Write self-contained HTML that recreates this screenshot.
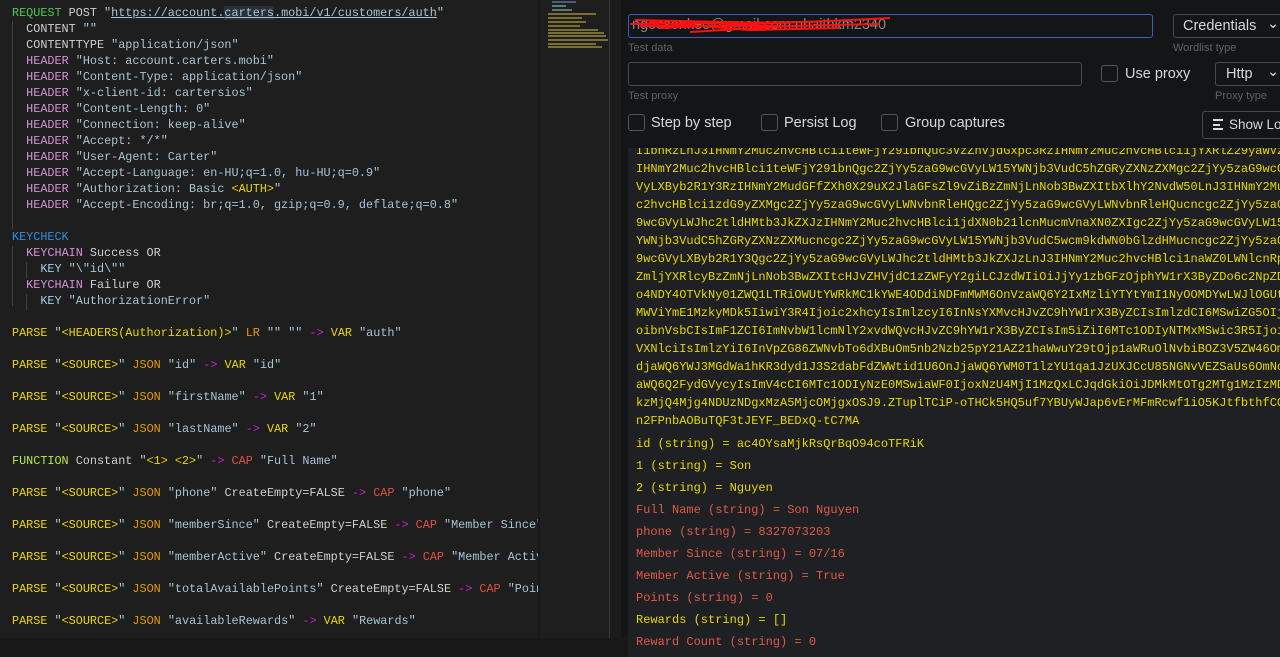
<!DOCTYPE html>
<html><head><meta charset="utf-8"><style>
*{margin:0;padding:0;box-sizing:border-box}
body{width:1280px;height:657px;overflow:hidden;background:#141517;position:relative;font-family:"Liberation Mono",monospace}
#ed{position:absolute;left:0;top:0;width:538px;height:638px;background:#1e1e1e;overflow:hidden}
#ed pre{position:absolute;left:12px;top:5px;font:11.8px/16px "Liberation Mono",monospace;color:#d0d0d0;white-space:pre}
.g{color:#4ec94e}.p{color:#d890d8}.s{color:#a9c4d4}.b{color:#2f8fe0}.k{color:#9cd0e8}.y{color:#e8d800}.o{color:#e89a00}.m{color:#d020d0}.r{color:#e05040}.f{color:#b8e840}
.u{text-decoration:underline}
.guide{position:absolute;width:1px;background:#404040}
#mini{position:absolute;left:538px;top:0;width:72px;height:638px;background:#1e1e1e;border-left:2px solid #191919}
#vl{position:absolute;left:609px;top:0;width:1px;height:638px;background:#3a3a3a}
#strip{position:absolute;left:610px;top:0;width:11px;height:638px;background:#1b1b1b}
#bot{position:absolute;left:0;top:638px;width:628px;height:19px;background:#181818}
#log{position:absolute;left:628px;top:148px;width:652px;height:509px;background:#1f2023;overflow:hidden;font-family:"Liberation Mono",monospace;font-size:12px}
#log .b64{position:absolute;left:8px;top:-6px;line-height:18px;color:#e8d800;white-space:pre;font-size:12px}
.ln{position:absolute;left:8px;white-space:pre;font-size:12px}
.ly{color:#e8d800}.lr{color:#e05a48}
.inp{position:absolute;border:1px solid #4a4a4a;border-radius:3px;background:#141517}
.lbl{position:absolute;font:11px "Liberation Sans",sans-serif;color:#5f6166}
.txt{position:absolute;font:14.5px "Liberation Sans",sans-serif;color:#d8d8d8;white-space:nowrap}
.cb{position:absolute;width:17px;height:17px;border:1px solid #555;border-radius:3px}
</style></head><body>
<div id="ed">
<div class="guide" style="left:12px;top:21px;height:208px"></div>
<div class="guide" style="left:12px;top:246px;height:60px"></div>
<div class="guide" style="left:26px;top:262px;height:16px"></div>
<div class="guide" style="left:26px;top:294px;height:16px"></div>
<pre><span class="g">REQUEST</span> POST <span class="s">"<span class="u">https://account.<span style="background:#2a3038">carters</span>.mobi/v1/customers/auth</span>"</span>
  CONTENT <span class="s">""</span>
  CONTENTTYPE <span class="s">"application/json"</span>
  <span class="p">HEADER</span> <span class="s">"Host: account.carters.mobi"</span>
  <span class="p">HEADER</span> <span class="s">"Content-Type: application/json"</span>
  <span class="p">HEADER</span> <span class="s">"x-client-id: cartersios"</span>
  <span class="p">HEADER</span> <span class="s">"Content-Length: 0"</span>
  <span class="p">HEADER</span> <span class="s">"Connection: keep-alive"</span>
  <span class="p">HEADER</span> <span class="s">"Accept: */*"</span>
  <span class="p">HEADER</span> <span class="s">"User-Agent: Carter"</span>
  <span class="p">HEADER</span> <span class="s">"Accept-Language: en-HU;q=1.0, hu-HU;q=0.9"</span>
  <span class="p">HEADER</span> <span class="s">"Authorization: Basic <span class="y">&lt;AUTH&gt;</span>"</span>
  <span class="p">HEADER</span> <span class="s">"Accept-Encoding: br;q=1.0, gzip;q=0.9, deflate;q=0.8"</span>

<span class="b">KEYCHECK</span>
  <span class="p">KEYCHAIN</span> Success OR
    <span class="k">KEY</span> <span class="s">"\"id\""</span>
  <span class="p">KEYCHAIN</span> Failure OR
    <span class="k">KEY</span> <span class="s">"AuthorizationError"</span>

<span class="y">PARSE</span> <span class="s">"<span class="y">&lt;HEADERS(Authorization)&gt;</span>"</span> <span class="o">LR</span> <span class="s">""</span> <span class="s">""</span> <span class="m">-&gt;</span> <span class="y">VAR</span> <span class="s">"auth"</span>

<span class="y">PARSE</span> <span class="s">"<span class="y">&lt;SOURCE&gt;</span>"</span> <span class="o">JSON</span> <span class="s">"id"</span> <span class="m">-&gt;</span> <span class="y">VAR</span> <span class="s">"id"</span>

<span class="y">PARSE</span> <span class="s">"<span class="y">&lt;SOURCE&gt;</span>"</span> <span class="o">JSON</span> <span class="s">"firstName"</span> <span class="m">-&gt;</span> <span class="y">VAR</span> <span class="s">"1"</span>

<span class="y">PARSE</span> <span class="s">"<span class="y">&lt;SOURCE&gt;</span>"</span> <span class="o">JSON</span> <span class="s">"lastName"</span> <span class="m">-&gt;</span> <span class="y">VAR</span> <span class="s">"2"</span>

<span class="f">FUNCTION</span> Constant <span class="s">"<span class="y">&lt;1&gt; &lt;2&gt;</span>"</span> <span class="m">-&gt;</span> <span class="r">CAP</span> <span class="s">"Full Name"</span>

<span class="y">PARSE</span> <span class="s">"<span class="y">&lt;SOURCE&gt;</span>"</span> <span class="o">JSON</span> <span class="s">"phone"</span> CreateEmpty=FALSE <span class="m">-&gt;</span> <span class="r">CAP</span> <span class="s">"phone"</span>

<span class="y">PARSE</span> <span class="s">"<span class="y">&lt;SOURCE&gt;</span>"</span> <span class="o">JSON</span> <span class="s">"memberSince"</span> CreateEmpty=FALSE <span class="m">-&gt;</span> <span class="r">CAP</span> <span class="s">"Member Since"</span>

<span class="y">PARSE</span> <span class="s">"<span class="y">&lt;SOURCE&gt;</span>"</span> <span class="o">JSON</span> <span class="s">"memberActive"</span> CreateEmpty=FALSE <span class="m">-&gt;</span> <span class="r">CAP</span> <span class="s">"Member Active"</span>

<span class="y">PARSE</span> <span class="s">"<span class="y">&lt;SOURCE&gt;</span>"</span> <span class="o">JSON</span> <span class="s">"totalAvailablePoints"</span> CreateEmpty=FALSE <span class="m">-&gt;</span> <span class="r">CAP</span> <span class="s">"Points"</span>

<span class="y">PARSE</span> <span class="s">"<span class="y">&lt;SOURCE&gt;</span>"</span> <span class="o">JSON</span> <span class="s">"availableRewards"</span> <span class="m">-&gt;</span> <span class="y">VAR</span> <span class="s">"Rewards"</span></pre>
</div>
<div id="mini">
<svg width="70" height="50" style="position:absolute;left:6px;top:0">
<g stroke-width="1.3">
<line x1="6" y1="2" x2="30" y2="2" stroke="#6a7fa0"/><line x1="6" y1="6" x2="20" y2="6" stroke="#8aa"/><line x1="6" y1="10" x2="26" y2="10" stroke="#8aa"/>
<line x1="2" y1="14" x2="50" y2="14" stroke="#b0a040"/><line x1="2" y1="18" x2="36" y2="18" stroke="#b0a040"/><line x1="2" y1="22" x2="40" y2="22" stroke="#b0a040"/>
<line x1="2" y1="26" x2="34" y2="26" stroke="#b0a040"/><line x1="2" y1="30" x2="52" y2="30" stroke="#b0a040"/><line x1="2" y1="33" x2="58" y2="33" stroke="#b0a040"/>
<line x1="2" y1="36" x2="60" y2="36" stroke="#b0a040"/><line x1="2" y1="40" x2="62" y2="40" stroke="#b0a040"/><line x1="2" y1="44" x2="50" y2="44" stroke="#b0a040"/><line x1="2" y1="47" x2="56" y2="47" stroke="#b0a040"/>
</g></svg>
<div style="position:absolute;left:70px;top:12px;width:6px;height:8px;background:#777"></div>
<div style="position:absolute;left:70px;top:26px;width:6px;height:8px;background:#777"></div>
</div>
<div id="vl"></div><div id="strip"></div><div id="bot"></div>

<div class="inp" style="left:628px;top:14px;width:525px;height:24px;border-color:#3d5bc0"></div>
<div class="txt" style="left:632px;top:17px;color:#888">ngocsonkeo@gmail.com:nhaithkm2340</div>
<svg style="position:absolute;left:590px;top:14px" width="330" height="24"><g stroke="#ff1010" stroke-width="2" fill="none"><path d="M40 10 L220 8 L300 4 M50 12 L200 12 L290 10 M60 8 L160 16 L250 14 M70 14 L260 6 M100 18 L200 12 M45 6 L180 9"/></g></svg>
<div class="lbl" style="left:628px;top:42px">Test data</div>
<div class="inp" style="left:1173px;top:14px;width:120px;height:24px"></div>
<div class="txt" style="left:1183px;top:18px">Credentials</div>
<div class="txt" style="left:1267px;top:16px">⌄</div>
<div class="lbl" style="left:1173px;top:42px">Wordlist type</div>
<div class="inp" style="left:628px;top:62px;width:454px;height:24px"></div>
<div class="lbl" style="left:628px;top:90px">Test proxy</div>
<div class="cb" style="left:1101px;top:65px"></div>
<div class="txt" style="left:1125px;top:66px">Use proxy</div>
<div class="inp" style="left:1215px;top:62px;width:80px;height:24px"></div>
<div class="txt" style="left:1226px;top:66px">Http</div>
<div class="txt" style="left:1267px;top:64px">⌄</div>
<div class="lbl" style="left:1215px;top:90px">Proxy type</div>
<div class="cb" style="left:628px;top:114px"></div><div class="txt" style="left:651px;top:115px">Step by step</div>
<div class="cb" style="left:761px;top:114px"></div><div class="txt" style="left:784px;top:115px">Persist Log</div>
<div class="cb" style="left:881px;top:114px"></div><div class="txt" style="left:905px;top:115px">Group captures</div>
<div class="inp" style="left:1202px;top:111px;width:90px;height:28px"></div>
<div style="position:absolute;left:1213px;top:119px;width:10px;height:11px;border-top:2px solid #ddd;border-bottom:2px solid #ddd"></div>
<div style="position:absolute;left:1213px;top:123.5px;width:7px;height:2px;background:#ddd"></div>
<div class="txt" style="left:1229px;top:117px;font-size:13.5px">Show Log</div>

<div id="log">
<div class="b64">I1bnRzLnJ3IHNmY2Muc2hvcHBlci1teWFjY291bnQuc3VzZnVjdGxpc3RzIHNmY2Muc2hvcHBlci1jYXRlZ29yaWVz
IHNmY2Muc2hvcHBlci1teWFjY291bnQgc2ZjYy5zaG9wcGVyLW15YWNjb3VudC5hZGRyZXNzZXMgc2ZjYy5zaG9wcG
VyLXByb2R1Y3RzIHNmY2MudGFfZXh0X29uX2JlaGFsZl9vZiBzZmNjLnNob3BwZXItbXlhY2NvdW50LnJ3IHNmY2Mu
c2hvcHBlci1zdG9yZXMgc2ZjYy5zaG9wcGVyLWNvbnRleHQgc2ZjYy5zaG9wcGVyLWNvbnRleHQucncgc2ZjYy5zaG
9wcGVyLWJhc2tldHMtb3JkZXJzIHNmY2Muc2hvcHBlci1jdXN0b21lcnMucmVnaXN0ZXIgc2ZjYy5zaG9wcGVyLW15
YWNjb3VudC5hZGRyZXNzZXMucncgc2ZjYy5zaG9wcGVyLW15YWNjb3VudC5wcm9kdWN0bGlzdHMucncgc2ZjYy5zaG
9wcGVyLXByb2R1Y3Qgc2ZjYy5zaG9wcGVyLWJhc2tldHMtb3JkZXJzLnJ3IHNmY2Muc2hvcHBlci1naWZ0LWNlcnRp
ZmljYXRlcyBzZmNjLnNob3BwZXItcHJvZHVjdC1zZWFyY2giLCJzdWIiOiJjYy1zbGFzOjphYW1rX3ByZDo6c2NpZD
o4NDY4OTVkNy01ZWQ1LTRiOWUtYWRkMC1kYWE4ODdiNDFmMWM6OnVzaWQ6Y2IxMzliYTYtYmI1NyOOMDYwLWJlOGUt
MWViYmE1MzkyMDk5IiwiY3R4Ijoic2xhcyIsImlzcyI6InNsYXMvcHJvZC9hYW1rX3ByZCIsImlzdCI6MSwiZG5OIj
oibnVsbCIsImF1ZCI6ImNvbW1lcmNlY2xvdWQvcHJvZC9hYW1rX3ByZCIsIm5iZiI6MTc1ODIyNTMxMSwic3R5Ijoi
VXNlciIsImlzYiI6InVpZG86ZWNvbTo6dXBuOm5nb2Nzb25pY21AZ21haWwuY29tOjp1aWRuOlNvbiBOZ3V5ZW46Om
djaWQ6YWJ3MGdWa1hKR3dyd1J3S2dabFdZWWtid1U6OnJjaWQ6YWM0T1lzYU1qa1JzUXJCcU85NGNvVEZSaUs6OmNo
aWQ6Q2FydGVycyIsImV4cCI6MTc1ODIyNzE0MSwiaWF0IjoxNzU4MjI1MzQxLCJqdGkiOiJDMkMtOTg2MTg1MzIzMD
kzMjQ4Mjg4NDUzNDgxMzA5MjcOMjgxOSJ9.ZTuplTCiP-oTHCk5HQ5uf7YBUyWJap6vErMFmRcwf1iO5KJtfbthfCO
n2FPnbAOBuTQF3tJEYF_BEDxQ-tC7MA</div>
<div class="ln ly" style="top:289px">id (string) = ac4OYsaMjkRsQrBqO94coTFRiK</div>
<div class="ln ly" style="top:311px">1 (string) = Son</div>
<div class="ln ly" style="top:333px">2 (string) = Nguyen</div>
<div class="ln lr" style="top:355px">Full Name (string) = Son Nguyen</div>
<div class="ln lr" style="top:377px">phone (string) = 8327073203</div>
<div class="ln lr" style="top:399px">Member Since (string) = 07/16</div>
<div class="ln lr" style="top:421px">Member Active (string) = True</div>
<div class="ln lr" style="top:443px">Points (string) = 0</div>
<div class="ln ly" style="top:465px">Rewards (string) = []</div>
<div class="ln lr" style="top:487px">Reward Count (string) = 0</div>
</div>
</body></html>
